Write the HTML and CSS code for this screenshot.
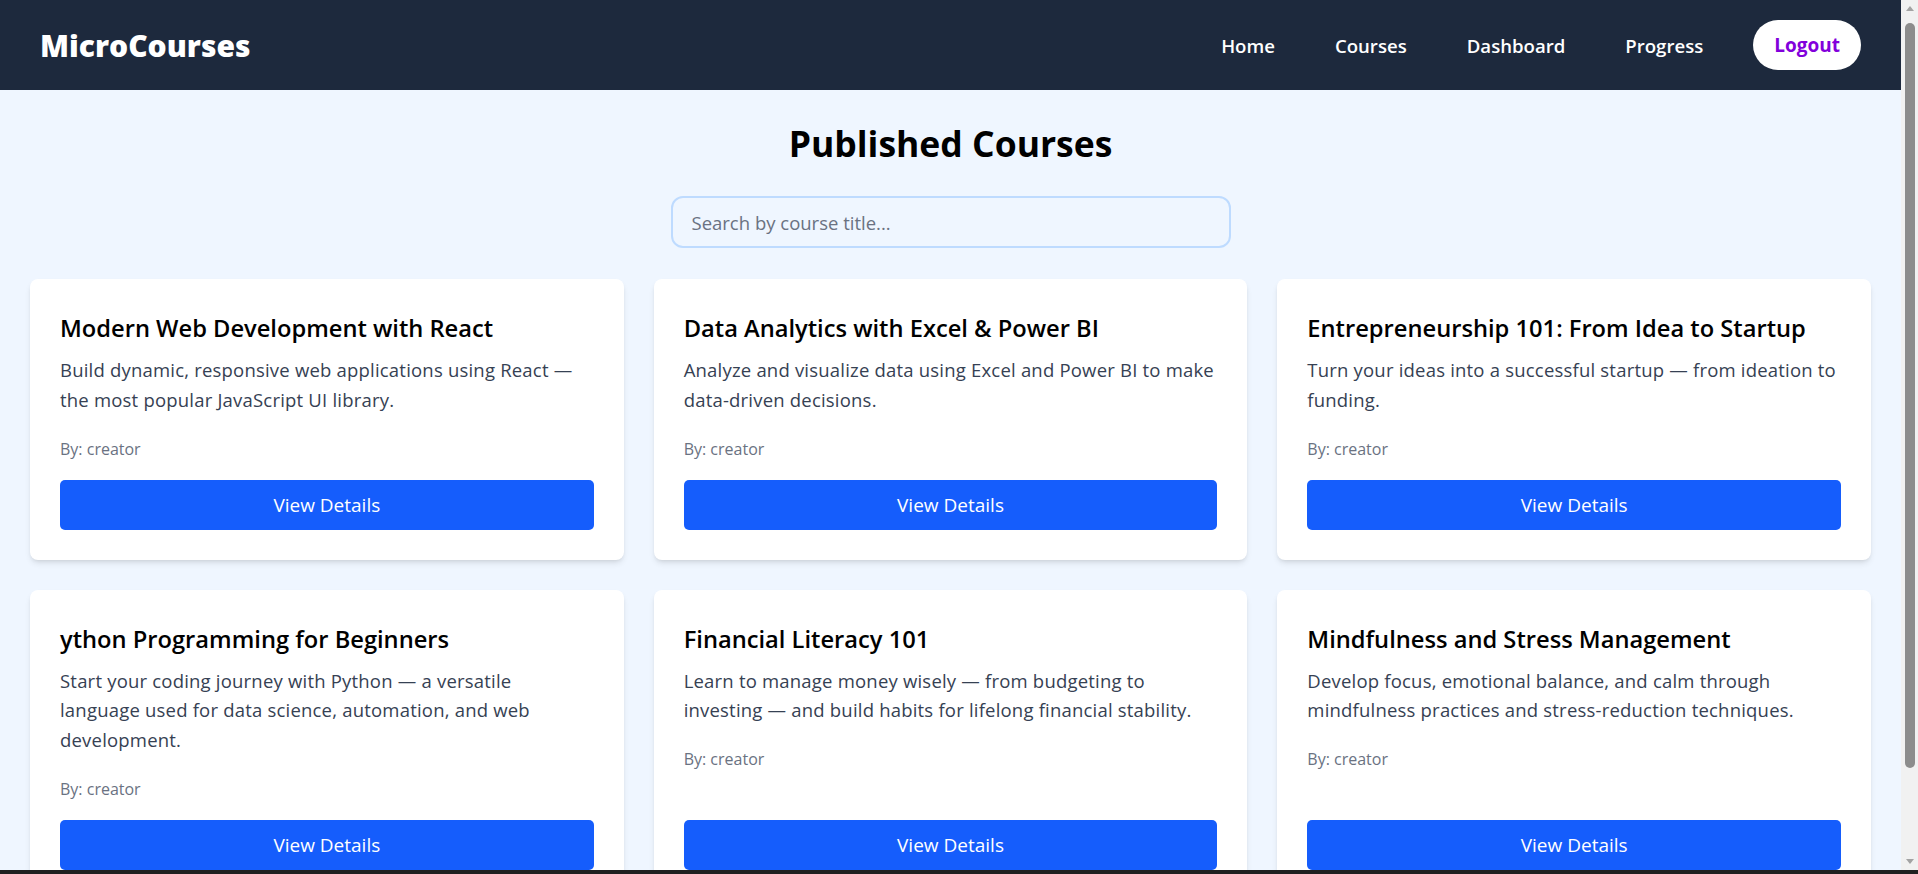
FILE: index.html
```html
<!DOCTYPE html>
<html lang="en">
<head>
<meta charset="utf-8">
<title>MicroCourses</title>
<link rel="stylesheet" href="styles.css">
</head>
<body>
<nav class="navbar">
  <div class="logo">MicroCourses</div>
  <div class="nav-right">
    <ul class="nav-links">
      <li><a href="#">Home</a></li>
      <li><a href="#">Courses</a></li>
      <li><a href="#">Dashboard</a></li>
      <li><a href="#">Progress</a></li>
    </ul>
    <button class="logout">Logout</button>
  </div>
</nav>
<main class="page">
  <h1 class="page-title">Published Courses</h1>
  <div class="search-wrap">
    <input class="search" type="text" placeholder="Search by course title...">
  </div>
  <section class="grid">
    <article class="card">
      <h2 class="card-title">Modern Web Development with React</h2>
      <p class="card-desc">Build dynamic, responsive web applications using React — the most popular JavaScript UI library.</p>
      <p class="card-by">By: creator</p>
      <button class="btn">View Details</button>
    </article>
    <article class="card">
      <h2 class="card-title">Data Analytics with Excel &amp; Power BI</h2>
      <p class="card-desc">Analyze and visualize data using Excel and Power BI to make data-driven decisions.</p>
      <p class="card-by">By: creator</p>
      <button class="btn">View Details</button>
    </article>
    <article class="card">
      <h2 class="card-title">Entrepreneurship 101: From Idea to Startup</h2>
      <p class="card-desc">Turn your ideas into a successful startup — from ideation to funding.</p>
      <p class="card-by">By: creator</p>
      <button class="btn">View Details</button>
    </article>
    <article class="card">
      <h2 class="card-title">ython Programming for Beginners</h2>
      <p class="card-desc">Start your coding journey with Python — a versatile language used for data science, automation, and web development.</p>
      <p class="card-by">By: creator</p>
      <button class="btn">View Details</button>
    </article>
    <article class="card">
      <h2 class="card-title">Financial Literacy 101</h2>
      <p class="card-desc">Learn to manage money wisely — from budgeting to investing — and build habits for lifelong financial stability.</p>
      <p class="card-by">By: creator</p>
      <button class="btn">View Details</button>
    </article>
    <article class="card">
      <h2 class="card-title">Mindfulness and Stress Management</h2>
      <p class="card-desc">Develop focus, emotional balance, and calm through mindfulness practices and stress-reduction techniques.</p>
      <p class="card-by">By: creator</p>
      <button class="btn">View Details</button>
    </article>
  </section>
</main>
<div class="scrollbar" aria-hidden="true">
  <span class="sb-arrow sb-up"></span>
  <span class="sb-thumb"></span>
  <span class="sb-arrow sb-down"></span>
</div>
<div class="taskbar-edge"></div>
</body>
</html>
```
FILE: styles.css
```css
* { box-sizing: border-box; }
html {
  background: #eff6ff;
  scrollbar-width: none;
}
html::-webkit-scrollbar { display: none; }
body {
  margin: 0 17px 0 0;
  background: #eff6ff;
  font-family: "Open Sans", "Noto Sans", "DejaVu Sans", sans-serif;
  color: #000;
}

.navbar {
  height: 90px;
  background: #1d293d;
  padding: 0 40px;
  display: flex;
  align-items: center;
  justify-content: space-between;
}
.logo {
  color: #fff;
  font-size: 30px;
  font-weight: 800;
}
.nav-right {
  display: flex;
  align-items: center;
  gap: 50px;
}
.nav-links {
  list-style: none;
  margin: 0;
  padding: 0;
  display: flex;
  gap: 60px;
}
.nav-links a {
  color: #fff;
  text-decoration: none;
  font-size: 18.6px;
  font-weight: 600;
}
.logout {
  height: 50px;
  padding: 0 21px;
  border: none;
  border-radius: 9999px;
  background: #fff;
  color: #8200db;
  font-family: inherit;
  font-size: 19px;
  font-weight: 700;
}

.page {
  padding: 0 30px 86px;
}
.page-title {
  margin: 0;
  padding-top: 33px;
  text-align: center;
  font-size: 35.5px;
  line-height: 40px;
  font-weight: 700;
}
.search-wrap {
  display: flex;
  justify-content: center;
  margin-top: 33px;
  margin-bottom: 31px;
}
.search {
  width: 560px;
  height: 52px;
  border: 2px solid #bedbff;
  border-radius: 12px;
  background: transparent;
  padding: 0 19px;
  font-family: inherit;
  font-size: 18.5px;
  color: #364153;
  outline: none;
}
.search::placeholder { color: #6a7282; }

.grid {
  display: grid;
  grid-template-columns: repeat(3, 1fr);
  gap: 30px;
}
.card {
  background: #fff;
  border-radius: 8px;
  box-shadow: 0 4px 6px -1px rgba(0,0,0,0.1), 0 2px 4px -2px rgba(0,0,0,0.1);
  padding: 30px;
  display: flex;
  flex-direction: column;
}
.card-title {
  margin: 3px 0 11px;
  font-size: 23.7px;
  line-height: 32px;
  font-weight: 600;
  color: #000;
}
.card-desc {
  margin: 0;
  font-size: 18.5px;
  line-height: 29.75px;
  letter-spacing: 0.2px;
  color: #364153;
}
.card-by {
  margin: 22px 0 19px;
  font-size: 16px;
  line-height: 24px;
  color: #6a7282;
}
.btn {
  margin-top: auto;
  height: 50px;
  width: 100%;
  border: none;
  border-radius: 5px;
  background: #155dfc;
  color: #fff;
  font-family: inherit;
  font-size: 19px;
  font-weight: 400;
}

.scrollbar {
  position: fixed;
  top: 0;
  right: 0;
  bottom: 4px;
  width: 17px;
  background: #f1f1f1;
  display: flex;
  flex-direction: column;
  align-items: center;
}
.sb-arrow {
  height: 17px;
  width: 17px;
  display: flex;
  align-items: center;
  justify-content: center;
  flex: none;
}
.sb-arrow::before {
  content: "";
  width: 0;
  height: 0;
  border-left: 4.5px solid transparent;
  border-right: 4.5px solid transparent;
}
.sb-up::before { border-bottom: 5px solid #a3a3a3; }
.sb-down { margin-top: auto; }
.sb-down::before { border-top: 5px solid #a3a3a3; }
.sb-thumb {
  margin-top: 6px;
  width: 10px;
  height: 745px;
  border-radius: 5px;
  background: #8c8c8c;
  flex: none;
}
.taskbar-edge {
  position: fixed;
  left: 0;
  right: 0;
  bottom: 0;
  height: 4px;
  background: #202020;
}
```
